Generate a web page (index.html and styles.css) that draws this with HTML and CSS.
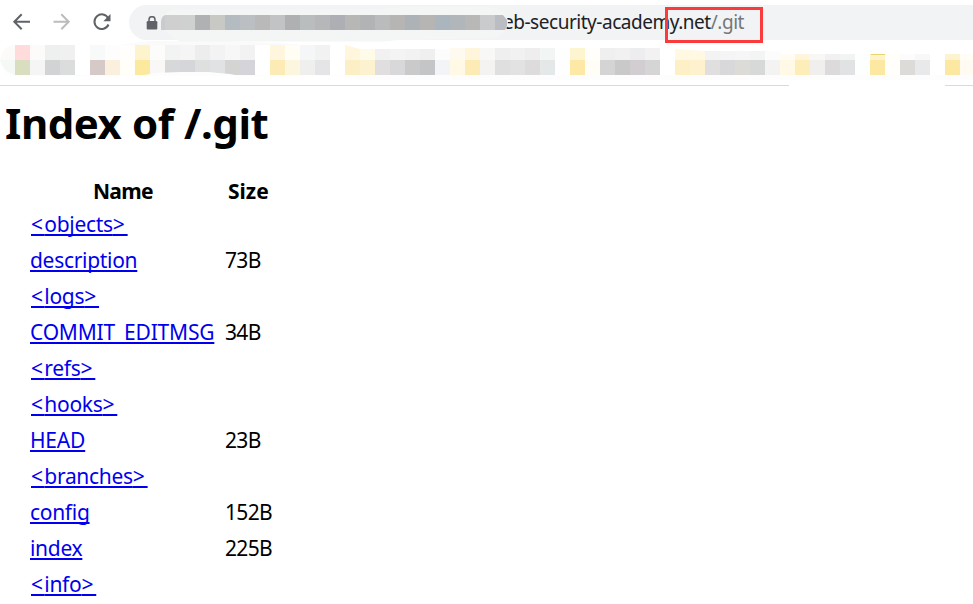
FILE: index.html
```html
<!DOCTYPE html>
<html lang="en">
<head>
<meta charset="utf-8">
<title>Index of /.git</title>
<link rel="stylesheet" href="styles.css">
</head>
<body>
<header class="browser">
  <div class="toolbar">
    <svg class="nav" width="129" height="45" viewBox="0 0 129 45" fill="none" stroke-width="2">
      <path d="M30 21.7H15M21.7 14.2L14.3 21.7L21.7 29.2" stroke="#5f6368"/>
      <path d="M53.500 21.700H68.500M61.300 14.200L68.700 21.700L61.300 29.200" stroke="#babcbe"/>
      <path d="M108.200 18.200A7.300 7.300 0 1 0 108.500 24.500" stroke="#5f6368"/>
      <path d="M110.500 14V21.200H103.300Z" fill="#5f6368"/>
    </svg>
    <div class="address">
      <svg class="lock" width="12" height="14" viewBox="0 0 12 14"><path d="M3 6V3.700a3 3 0 0 1 6 0V6" fill="none" stroke="#5f6368" stroke-width="1.500"/><rect x=".7" y="5" width="10.600" height="8.500" rx="1.200" fill="#5f6368"/></svg>
      <span class="url">eb-security-academy.net<span class="path">/.git</span></span>
      <svg class="smudge" id="host" width="350" height="37" viewBox="160 5 350 37"></svg>
      <span class="highlight"></span>
    </div>
  </div>
  <svg class="bookmarks" id="bookmarks" width="973" height="41" viewBox="0 40 973 41"></svg>
  <div class="divider"><span></span><span></span></div>
</header>
<main>
  <h1>Index of /.git</h1>
  <table>
    <thead><tr><th class="name">Name</th><th class="size">Size</th></tr></thead>
    <tbody>
      <tr><td><a href="#"><span>&lt;</span>objects<span>&gt;</span></a></td><td></td></tr>
      <tr><td><a href="#">description</a></td><td>73B</td></tr>
      <tr><td><a href="#"><span>&lt;</span>logs<span>&gt;</span></a></td><td></td></tr>
      <tr><td><a class="caps" href="#">COMMIT_EDITMSG</a></td><td>34B</td></tr>
      <tr><td><a href="#"><span>&lt;</span>refs<span>&gt;</span></a></td><td></td></tr>
      <tr><td><a href="#"><span>&lt;</span>hooks<span>&gt;</span></a></td><td></td></tr>
      <tr><td><a class="caps" href="#">HEAD</a></td><td>23B</td></tr>
      <tr><td><a href="#"><span>&lt;</span>branches<span>&gt;</span></a></td><td></td></tr>
      <tr><td><a href="#">config</a></td><td>152B</td></tr>
      <tr><td><a href="#">index</a></td><td>225B</td></tr>
      <tr><td><a href="#"><span>&lt;</span>info<span>&gt;</span></a></td><td></td></tr>
    </tbody>
  </table>
</main>
<script src="mosaic.js"></script>
</body>
</html>
```
FILE: styles.css
```css
* { box-sizing: border-box; }
body { margin: 0; width: 973px; height: 604px; overflow: hidden; background: #fff; color: #000; font-family: "Noto Sans", "Open Sans", sans-serif; }
svg { display: block; }
.browser { height: 86px; }
.toolbar { display: flex; height: 40px; }
.nav { flex: none; }
.address { position: relative; flex: 1; margin-top: 5px; height: 35px; background: #f1f3f4; border-radius: 18px 0 0 18px; display: flex; align-items: center; }
.lock { position: absolute; left: 17px; top: 11px; }
.url { margin-left: 374px; font-size: 19px; line-height: 35px; letter-spacing: -.47px; color: #202124; white-space: nowrap; }
.path { color: #74777a; }
.smudge { position: absolute; left: 31px; top: 0; }
.highlight { position: absolute; left: 536px; top: 2px; width: 98px; height: 36px; border: 3px solid #fb3b3b; }
.divider { display: flex; justify-content: space-between; margin-top: 4px; height: 1px; }
.divider span { width: 789px; background: #dadcdc; }
.divider span + span { width: 28px; }
h1 { margin: 0; padding-left: 5px; height: 88px; line-height: 74px; font-size: 42px; letter-spacing: -.45px; }
table { margin-left: 27px; border-spacing: 0; table-layout: fixed; width: 260px; font-size: 21px; }
th, td { padding: 0 3px; height: 36px; line-height: 36px; text-align: left; white-space: nowrap; }
th { width: 195px; height: 32px; line-height: 34px; }
th.name { padding-left: 66px; letter-spacing: -.7px; }
th.size { width: 65px; padding: 0 0 0 6px; }
thead tr { height: 32px; line-height: 32px; }
thead th { line-height: 32px; padding-top: 1px; }
tbody td { padding-bottom: 1px; line-height: 35px; }
td { letter-spacing: -.4px; }
td + td { letter-spacing: -.65px; }
a { color: #0000ee; letter-spacing: -.3px; text-decoration: underline; text-decoration-thickness: 2px; text-underline-offset: 2px; text-decoration-skip-ink: none; }
a.caps { letter-spacing: -.2px; }
a span { letter-spacing: 2.8px; }
a span:first-child { padding-left: 1px; letter-spacing: 1.3px; }
```
FILE: mosaic.js
```js
const NS = "http://www.w3.org/2000/svg";
function shape(svg, name, attrs) {
  const el = document.createElementNS(NS, name);
  for (const key in attrs) el.setAttribute(key, attrs[key]);
  svg.append(el);
}
function cells(svg, start, y, h, colors) {
  colors.split(" ").forEach((c, i) => {
    if (c !== "-") shape(svg, "rect", { x: start + i * 15, y, width: 15, height: h, fill: "#" + c });
  });
}
const host = document.getElementById("host");
shape(host, "path", { d: "M161 24Q163 9 180 9H383L400 7H490Q505 10 508 20Q508 35 493 38L400 40L383 41.500H180Q165 35 161 24Z", fill: "#f4f6f5" });
shape(host, "path", { d: "M161 30V22Q161 17 165 15V30Z", fill: "#c9cccd" });
cells(host, 165, 15, 15, "d0cfcf cfd1d1 b0b1b3 c8c8c4 b5bcc1 bcbfc2 b9b9b9 c1c3c4 aeb0b1 babdbe b5b7b8 adafb4 b7b7b6 b1b3b4 b9bbbc b6b5b4 adb2b6 b7b5b3 aab5be b0b6b9 b8b8b7 cacbcd");
shape(host, "path", { d: "M495 15H503L507 20V26L505 30H495Z", fill: "#babdc1" });

const bar = document.getElementById("bookmarks");
shape(bar, "path", { d: "M120 45L150 41H225L298 44V45Z", fill: "#f9faf9" });
shape(bar, "path", { d: "M0 60H973V80H360L340 76H10Q0 70 0 60Z", fill: "#fdfdfd" });
shape(bar, "path", { d: "M0 60Q3 45 15 45V60Z", fill: "#fdfbf9" });
shape(bar, "path", { d: "M0 60H15V75Q3 72 0 60Z", fill: "#f4f9f6" });
cells(bar, 15, 45, 15, "ffdcdb fdfbf9 eef0f0 f0f0f0 ffffff f8f9f9 fdfdfe fffefd fdf3cd fcfcfa f2f4f4 f4f5f4 ededee f3f3f4 f7f7f8 f2f2f2 ffffff fff6dd fffdf4 f5f6f7 f2f2f3 ffffff");
shape(bar, "path", { d: "M345 45L360 49V60H345Z", fill: "#fff6dd" });
cells(bar, 360, 49, 11, "fffbe9 f1f1f1 f4f4f4 f2f2f2 efefef fcfcfd");
cells(bar, 450, 48, 12, "fffaf0 fef5da f8f8f7 efefef f1f1f1 efeeee f3f4f4 fefefe fdf4d0 fffefa efeff0 f1f1f1 ededef f2f2f3 ffffff");
shape(bar, "path", { d: "M675 49L705 51V60H675Z", fill: "#fff9e3" });
cells(bar, 705, 51, 9, "f3f3f4 f5f5f5 f5f6f5 f3f5f5 fcfcfc");
cells(bar, 780, 54, 6, "fffcf3 fff5db f7f7f6 f1f1f2 f2f3f3 fdfefe fff3cc fffef9 fcfcfc f8f8f9 ffffff fdf3cf fffdf5");
shape(bar, "rect", { x: 871, y: 54, width: 14, height: 1, fill: "#edd36c" });
cells(bar, 15, 60, 15, "dadec0 f4f5f4 d2d3d4 dadddc ffffff d6cac9 fbf0dd fffef8 fce99e f9f8f7 d7d8d9 d5d6d9 dee0e0 e1e2e3 d4d4d3 d4d4da ffffff fdebb5 fdf6df efefed e5e5e8 ffffff fcefc6 fcf2d0 e1dedf d8d8da cacaca c4c5c7 f2f4f7 fff9e6 fdebb5 f4f3f1 dfdfe0 e2e2e2 dedbdc e5e8e9 fefefe fde8a5 fffdf5 d4d4d4 cac9ca d1cdd0 d5d5d5 ffffff fdf0c6 fdf1ce e1dedf d8d8da dcdbd8 d6d9d7 f3f3f3 fff9e5 fdedb8 f0efed dddadb e1e2e3 fdfefe fde8a2 fffefa dddbd9 e8e9eb ffffff fde8a2 fffaf2");
shape(bar, "path", { d: "M145 75L155 73L180 72H208L230 74L240 76H145Z", fill: "#fdfdfd" });
```
